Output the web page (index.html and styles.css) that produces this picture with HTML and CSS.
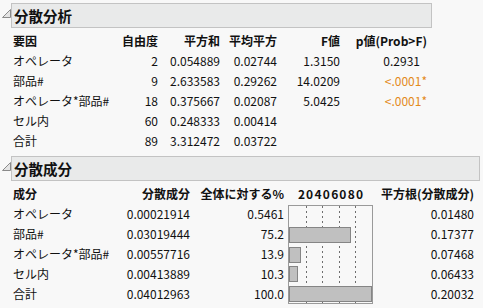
FILE: index.html
```html
<!DOCTYPE html>
<html lang="ja">
<head>
<meta charset="utf-8">
<link rel="stylesheet" href="styles.css">
</head>
<body>
<div class="section">
  <div class="head">
    <svg class="tri" width="9" height="9" viewBox="0 0 9 9"><path d="M0.5 8.5 L8.5 8.5 L8.5 0.5 Z" fill="#e4e4e4" stroke="#8a8a8a" stroke-width="1"/></svg>
    <div class="title">分散分析</div>
  </div>
  <div class="tbl anova">
    <div class="h l">要因</div><div class="h">自由度</div><div class="h">平方和</div><div class="h">平均平方</div><div class="h">F値</div><div class="h">p値(Prob&gt;F)</div>
    <div class="l">オペレータ</div><div>2</div><div>0.054889</div><div>0.02744</div><div>1.3150</div><div class="p">0.2931</div>
    <div class="l">部品#</div><div>9</div><div>2.633583</div><div>0.29262</div><div>14.0209</div><div class="p sig">&lt;.0001<span class="ast">*</span></div>
    <div class="l">オペレータ*部品#</div><div>18</div><div>0.375667</div><div>0.02087</div><div>5.0425</div><div class="p sig">&lt;.0001<span class="ast">*</span></div>
    <div class="l">セル内</div><div>60</div><div>0.248333</div><div>0.00414</div><div></div><div></div>
    <div class="l">合計</div><div>89</div><div>3.312472</div><div>0.03722</div><div></div><div></div>
  </div>
</div>
<div class="section s2">
  <div class="head">
    <svg class="tri" width="9" height="9" viewBox="0 0 9 9"><path d="M0.5 8.5 L8.5 8.5 L8.5 0.5 Z" fill="#e4e4e4" stroke="#8a8a8a" stroke-width="1"/></svg>
    <div class="title">分散成分</div>
  </div>
  <div class="tbl vc">
    <div class="h l">成分</div><div class="h">分散成分</div><div class="h">全体に対する%</div>
    <div class="h axis"><span class="tick t20">20</span><span class="tick t40">40</span><span class="tick t60">60</span><span class="tick t80">80</span></div>
    <div class="h">平方根(分散成分)</div>

    <div class="l">オペレータ</div><div>0.00021914</div><div>0.5461</div>
    <div class="chart">
      <div class="grid g20"></div><div class="grid g40"></div><div class="grid g60"></div><div class="grid g80"></div>
      <div class="barrow"></div>
      <div class="barrow"><div class="bar" style="width:75.2%"></div></div>
      <div class="barrow"><div class="bar" style="width:13.9%"></div></div>
      <div class="barrow"><div class="bar" style="width:10.3%"></div></div>
      <div class="barrow"><div class="bar" style="width:100%"></div></div>
    </div>
    <div>0.01480</div>
    <div class="l">部品#</div><div>0.03019444</div><div>75.2</div><div>0.17377</div>
    <div class="l">オペレータ*部品#</div><div>0.00557716</div><div>13.9</div><div>0.07468</div>
    <div class="l">セル内</div><div>0.00413889</div><div>10.3</div><div>0.06433</div>
    <div class="l">合計</div><div>0.04012963</div><div>100.0</div><div>0.20032</div>
  </div>
</div>
</body>
</html>
```
FILE: styles.css
```css
html, body {
  margin: 0;
  padding: 0;
  background: #f8f8f8;
}
body {
  padding-top: 3px;
  font-family: "Noto Sans CJK JP", "Noto Sans", sans-serif;
  font-size: 12px;
  color: #111;
}
.section {
  width: fit-content;
  display: flex;
  flex-direction: column;
}
.s2 {
  margin-top: 5px;
}
.head {
  display: flex;
  align-items: flex-start;
}
.tri {
  margin-left: 2px;
  margin-top: 6px;
  flex: none;
}
.title {
  flex: 1;
  height: 23px;
  line-height: 23px;
  border: 1px solid #c3c3c3;
  background: #e9eaea;
  font-weight: bold;
  font-size: 14.5px;
  padding-left: 2px;
  white-space: nowrap;
}
.tbl {
  display: grid;
  margin-left: 11px;
  padding: 3px 5px 0 2px;
  grid-auto-rows: 20px;
  line-height: 20px;
}
.tbl > div {
  text-align: right;
  white-space: nowrap;
}
.tbl > .l {
  text-align: left;
}
.h {
  font-weight: bold;
}
.anova {
  grid-template-columns: 97px 48px 62px 57px 63px 87px;
}
.p {
  padding-right: 7px;
}
.sig {
  color: #e38a1c;
}
.ast {
  margin-right: -7px;
}
.vc {
  grid-template-columns: 107px 70px 94px 89px 101px;
  padding-right: 6px;
}
.tbl > .axis {
  position: relative;
}
.tick {
  position: absolute;
  top: 0;
  letter-spacing: 1px;
  transform: translateX(calc(-50% + 0.5px));
}
.t20 { left: calc(5px + 83px * 0.2); }
.t40 { left: calc(5px + 83px * 0.4); }
.t60 { left: calc(5px + 83px * 0.6); }
.t80 { left: calc(5px + 83px * 0.8); }
.chart {
  grid-column: 4;
  grid-row: 2 / 7;
  margin: 1px 0 0 4px;
  width: 85px;
  box-sizing: border-box;
  border: 1px solid #9a9a9a;
  position: relative;
  display: flex;
  flex-direction: column;
}
.grid {
  position: absolute;
  top: 0;
  bottom: 0;
  width: 1px;
  background: repeating-linear-gradient(to bottom, #6e6e6e 0 2px, transparent 2px 5px);
}
.g20 { left: calc(83px * 0.2); }
.g40 { left: calc(83px * 0.4); }
.g60 { left: calc(83px * 0.6); }
.g80 { left: calc(83px * 0.8); }
.barrow {
  height: 20px;
  display: flex;
  align-items: flex-start;
  position: relative;
}
.bar {
  margin-top: 2px;
  height: 16px;
  box-sizing: border-box;
  border: 1px solid #858585;
  background: #c0c0c0;
  position: relative;
  z-index: 1;
}
```
